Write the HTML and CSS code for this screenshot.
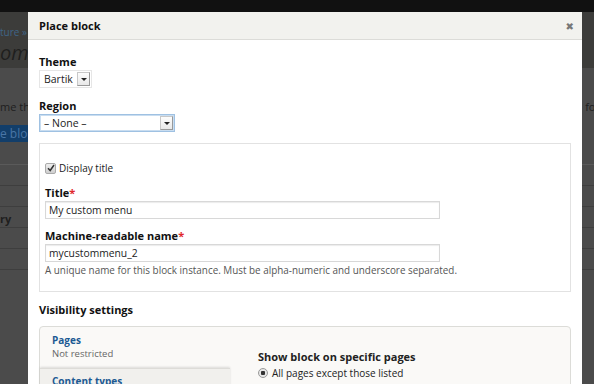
FILE: index.html
```html
<!DOCTYPE html>
<html lang="en">
<head>
    <meta charset="UTF-8">
    <title>Place block</title>
    <link rel="stylesheet" href="styles.css">
</head>
<body>
    <div class="topbar"></div>
    <div class="page">
        <div class="page-header">
            <div class="breadcrumb clip">ture &raquo; M</div>
            <div class="page-title clip">om r</div>
        </div>
        <div class="page-body">
            <p class="page-text"><span class="clip">me th</span><span class="page-text-right">for</span></p>
            <div class="page-button clip">e bloc</div>
            <div class="page-table">
                <div class="row"></div>
                <div class="row"></div>
                <div class="row row-label">ry</div>
                <div class="row"></div>
                <div class="row"></div>
            </div>
        </div>
    </div>

    <div class="dialog">
        <div class="dialog-titlebar">
            <span class="dialog-title">Place block</span>
            <span class="dialog-close">&#x2716;</span>
        </div>
        <div class="dialog-content">
            <div class="form-item">
                <label class="form-label">Theme</label>
                <div class="select select-theme">
                    <span class="select-value">Bartik</span>
                    <span class="select-arrow"></span>
                </div>
            </div>
            <div class="form-item">
                <label class="form-label">Region</label>
                <div class="select select-region">
                    <span class="select-value">&ndash; None &ndash;</span>
                    <span class="select-arrow"></span>
                </div>
            </div>

            <div class="fieldset">
                <div class="checkbox-row">
                    <span class="checkbox">
                        <svg width="8" height="8" viewBox="0 0 8 8"><path d="M1 4.2 L3.2 6.5 L7 1" fill="none" stroke="#333" stroke-width="1.5"/></svg>
                    </span>
                    <span>Display title</span>
                </div>
                <div class="form-item">
                    <label class="form-label">Title<span class="required">*</span></label>
                    <div class="text-input">My custom menu</div>
                </div>
                <div class="form-item">
                    <label class="form-label">Machine-readable name<span class="required">*</span></label>
                    <div class="text-input">mycustommenu_2</div>
                    <div class="description">A unique name for this block instance. Must be alpha-numeric and underscore separated.</div>
                </div>
            </div>

            <h3 class="section-title">Visibility settings</h3>
            <div class="vertical-tabs">
                <ul class="tab-list">
                    <li class="tab selected">
                        <a class="tab-title">Pages</a>
                        <span class="tab-summary">Not restricted</span>
                    </li>
                    <li class="tab">
                        <a class="tab-title">Content types</a>
                    </li>
                </ul>
                <div class="tab-pane">
                    <div class="pane-label">Show block on specific pages</div>
                    <div class="radio-row">
                        <span class="radio"></span>
                        <span>All pages except those listed</span>
                    </div>
                </div>
            </div>
        </div>
    </div>
</body>
</html>
```

FILE: styles.css
```css
html, body {
    margin: 0;
    padding: 0;
}
body {
    width: 594px;
    height: 384px;
    overflow: hidden;
    background-color: #4b4b4b;
    font-family: "Open Sans", "DejaVu Sans", sans-serif;
    position: relative;
}
.topbar {
    height: 12px;
    background-color: #111;
}

/* page under the overlay, only a strip shows on the left */
.clip {
    display: block;
    width: 28px;
    overflow: hidden;
    white-space: nowrap;
}
.page-header {
    height: 56px;
    background-color: #3c3c3a;
    box-sizing: border-box;
    padding-top: 14px;
}
.breadcrumb {
    font-size: 10px;
    color: #3f6587;
    line-height: 12px;
}
.page-title {
    font-size: 20px;
    font-style: italic;
    color: #1f1f1e;
    line-height: 20px;
    margin-top: 5px;
}
.page-body {
    padding-top: 32px;
}
.page-text {
    margin: 0;
    font-size: 11px;
    line-height: 14px;
    color: #1e1e1e;
    display: flex;
    justify-content: space-between;
}
.page-text-right {
    margin-right: -6px;
}
.page-button {
    margin-top: 11px;
    height: 17px;
    background-color: #123e6a;
    color: #4a76a6;
    font-size: 12px;
    line-height: 17px;
}
.page-table {
    margin-top: 22px;
    border-top: 1px solid #5a5a5a;
}
.row {
    height: 20px;
    border-bottom: 1px solid #3e3e3e;
}
.row-label {
    font-size: 11px;
    font-weight: bold;
    color: #1e1e1e;
    line-height: 24px;
    height: 20px;
}

/* dialog */
.dialog {
    position: absolute;
    left: 28px;
    top: 12px;
    width: 554px;
    height: 372px;
    overflow: hidden;
    background-color: #fff;
    color: #222;
}
.dialog-titlebar {
    height: 27px;
    background-color: #f2f2ee;
    border-bottom: 1px solid #dcdcd8;
    display: flex;
    align-items: center;
    justify-content: space-between;
    padding: 0 8px 0 11px;
}
.dialog-title {
    font-size: 11px;
    font-weight: bold;
    color: #111;
}
.dialog-close {
    font-size: 10px;
    color: #777;
}
.dialog-content {
    padding: 15px 11px 0 11px;
}
.form-item {
    margin-bottom: 11px;
}
.form-label {
    display: block;
    font-size: 11px;
    font-weight: bold;
    line-height: 14px;
    color: #111;
    margin-bottom: 1px;
}
.required {
    color: #e0262b;
}

.select {
    display: flex;
    align-items: center;
    justify-content: space-between;
    height: 18px;
    box-sizing: border-box;
    font-size: 10.5px;
    color: #222;
}
.select-theme {
    width: 53px;
    border: 1px solid #e6e6e6;
    padding: 0 1px 0 4px;
}
.select-region {
    width: 136px;
    border: 1px solid #9fc1e2;
    box-shadow: inset 0 0 0 1px #c9ddf0;
    padding: 0 1px 0 4px;
    margin-top: 1px;
}
.select-value {
    line-height: 14px;
}
.select-arrow {
    width: 13px;
    height: 14px;
    box-sizing: border-box;
    border: 1px solid #c8c8c8;
    border-right-color: #999;
    border-bottom-color: #999;
    background: linear-gradient(#fdfdfd, #e8e8e8);
    position: relative;
}
.select-arrow::after {
    content: "";
    position: absolute;
    left: 3px;
    top: 5px;
    border-left: 3px solid transparent;
    border-right: 3px solid transparent;
    border-top: 3px solid #222;
}

.fieldset {
    border: 1px solid #e2e2e2;
    margin-top: 11px;
    padding: 17px 5px 9px 5px;
    height: 149px;
    box-sizing: border-box;
}
.checkbox-row {
    display: flex;
    align-items: center;
    gap: 3px;
    font-size: 10px;
    line-height: 14px;
    margin-bottom: 11px;
}
.checkbox {
    width: 9px;
    height: 9px;
    border: 1px solid #aaa;
    border-radius: 2px;
    background: linear-gradient(#eee, #cfcfcf);
    display: flex;
    align-items: center;
    justify-content: center;
}
.text-input {
    width: 395px;
    height: 18px;
    box-sizing: border-box;
    border: 1px solid #d8d8d8;
    box-shadow: inset 0 1px 1px #ececec;
    font-size: 10.3px;
    line-height: 16px;
    padding-left: 3px;
    color: #222;
}
.fieldset .form-item {
    margin-bottom: 10px;
}
.description {
    font-size: 9.9px;
    color: #555;
    line-height: 13px;
    margin-top: 2px;
}

.section-title {
    margin: 11px 0 9px 0;
    font-size: 11px;
    line-height: 14px;
    font-weight: bold;
    color: #111;
}
.vertical-tabs {
    display: flex;
    border: 1px solid #dcdcd8;
    border-radius: 4px;
    background-color: #faf9f7;
    height: 80px;
}
.tab-list {
    list-style: none;
    margin: 0;
    padding: 0;
    width: 190px;
}
.tab {
    padding: 7px 12px 8px 12px;
    display: flex;
    flex-direction: column;
}
.tab + .tab {
    background-color: #f1f0ed;
    box-shadow: 0 -1px 2px rgba(0, 0, 0, 0.12);
    border-top: 1px solid #dddcd8;
    padding-top: 6px;
}
.tab-title {
    font-size: 10px;
    font-weight: bold;
    color: #1c5a93;
    line-height: 13px;
}
.tab-summary {
    font-size: 9.5px;
    color: #666;
    line-height: 13px;
}
.tab-pane {
    padding: 23px 0 0 28px;
}
.pane-label {
    font-size: 11px;
    font-weight: bold;
    color: #222;
    line-height: 14px;
    margin-bottom: 2px;
}
.radio-row {
    display: flex;
    align-items: center;
    gap: 4px;
    font-size: 10px;
    line-height: 14px;
    color: #222;
}
.radio {
    width: 8px;
    height: 8px;
    border: 1px solid #999;
    border-radius: 50%;
    background: radial-gradient(circle, #333 0, #333 2px, #e6e6e6 2.5px);
}
```
